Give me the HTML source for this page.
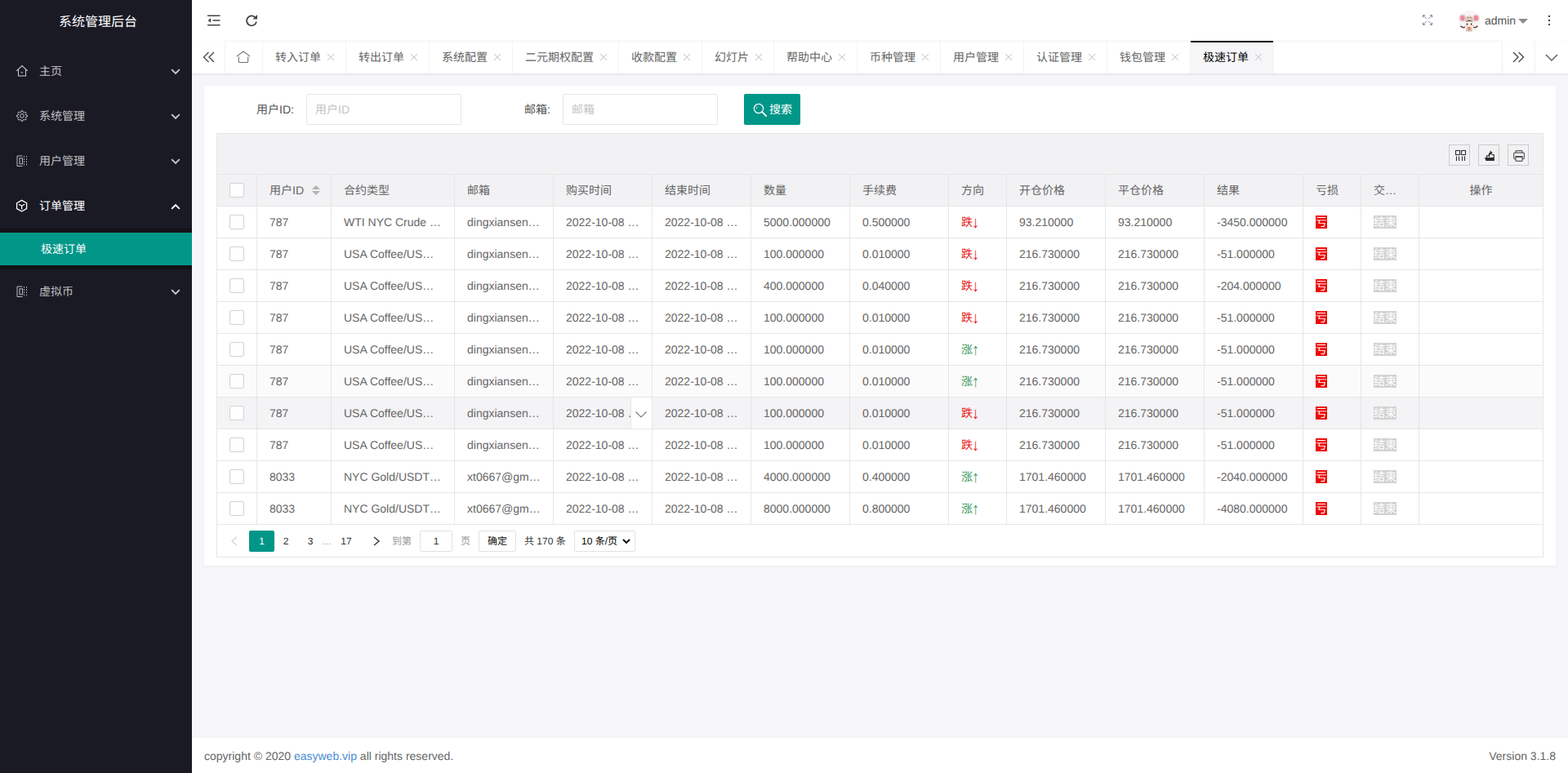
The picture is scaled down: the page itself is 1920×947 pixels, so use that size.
<!DOCTYPE html>
<html lang="zh-CN">
<head>
<meta charset="utf-8">
<title>系统管理后台</title>
<style>
*{box-sizing:border-box;margin:0;padding:0}
html,body{width:1920px;height:947px;overflow:hidden}
body{position:relative;background:#f6f6f9;font-family:"Liberation Sans","Noto Sans CJK SC",sans-serif;font-size:14px;color:#666;line-height:24px;text-rendering:geometricPrecision}
i{font-style:normal}
a{color:#4a8bd2;text-decoration:none}
svg{display:block}

/* ---------- sidebar ---------- */
.side{position:absolute;left:0;top:0;width:235px;height:947px;background:#1a1a24;z-index:5}
.logo{position:absolute;left:0;top:0;width:240px;height:50px;line-height:55px;text-align:center;color:#fff;font-size:16px;white-space:nowrap}
.nav{position:absolute;left:0;top:60px;width:235px}
.ni{position:relative;height:55px;line-height:55px;color:rgba(255,255,255,.72);font-size:14px;white-space:nowrap}
.ni.on{color:#fff}
.ni .ic{position:absolute;left:19px;top:19px;width:16px;height:16px}
.ni .tx{position:absolute;left:48px;top:0}
.ni .ar{position:absolute;left:209px;top:24px;width:12px;height:8px}
.child{height:50px;background:rgba(0,0,0,.3);padding:5px 0}
.child .it{height:40px;line-height:40px;background:#009688;color:#fff;padding-left:50px;white-space:nowrap}

/* ---------- header ---------- */
.header{position:absolute;left:235px;top:0;width:1685px;height:50px;background:#fff}
.header .hi{position:absolute}
.admin{position:absolute;left:1583px;top:0;height:50px;line-height:51px;font-size:14px;color:#555;white-space:nowrap}
.caret{position:absolute;left:1624px;top:23px;width:0;height:0;border:6px solid transparent;border-top-color:#8c8c8c;border-bottom-width:0}
.avatar{position:absolute;left:1551px;top:13px;width:26px;height:26px}

/* ---------- tabs ---------- */
.tabs{position:absolute;left:235px;top:50px;width:1685px;height:40px;background:#fff;box-shadow:0 1px 3px rgba(0,0,0,.10),inset 0 1px 0 #f4f4f6;z-index:3}
.tab{position:absolute;top:0;height:40px;border-right:1px solid #f3f3f5;line-height:40px;color:#666;white-space:nowrap;overflow:hidden}
.tab .tt{position:absolute;left:15px;top:0}
.tab .x{position:absolute;right:13px;top:15px}
.tab.home svg{position:absolute;left:13px;top:12px}
.tab.act{background:#f6f6f8;box-shadow:inset 0 2px 0 #000;color:#000}
.tab-ctl{position:absolute;top:0;width:40px;height:40px;background:#fff}
.tab-ctl svg{position:absolute}
.tl{left:0;width:41px;border-right:1px solid #f2f2f4}
.tl svg{left:13px;top:13px}
.tr1{left:1604px;border-left:1px solid #f2f2f4}
.tr1 svg{left:11px;top:13px}
.tr2{left:1644px;border-left:1px solid #f2f2f4}
.tr2 svg{left:12px;top:16px}

/* ---------- card ---------- */
.card{position:absolute;left:250px;top:105px;width:1655px;height:588px;background:#fff;border-radius:2px;box-shadow:0 1px 2px rgba(0,0,0,.04)}
.flabel{position:absolute;top:10px;height:38px;line-height:38px;text-align:right;color:#555;white-space:nowrap}
.finput{position:absolute;top:10px;width:190px;height:38px;line-height:36px;border:1px solid #e6e6e6;border-radius:2px;padding-left:10px;color:#c4c4c4;white-space:nowrap;background:#fff}
.sbtn{position:absolute;left:661px;top:10px;width:69px;height:38px;line-height:38px;background:#009688;border-radius:2px;color:#fff;white-space:nowrap}
.sbtn>svg{position:absolute;left:11px;top:11px}
.sbtn span{position:absolute;left:31px;top:0}

/* ---------- table ---------- */
.tview{position:absolute;left:15px;top:58px;width:1625px;height:520px;border:1px solid #e6e6e6;background:#fff}
.ttool{position:relative;height:50px;background:#f2f2f4;border-bottom:1px solid #e6e6e6}
.tbtn{position:absolute;top:13px;width:26px;height:26px;border:1px solid #ccc;background:transparent}
.tbtn svg{position:absolute;left:0;top:0}
.tb{border-collapse:separate;border-spacing:0;table-layout:fixed;width:1623px}
.tb th,.tb td{height:39px;border-right:1px solid #e6e6e6;border-bottom:1px solid #e6e6e6;text-align:left;font-weight:normal;font-size:14px;color:#666;padding:0;position:relative;vertical-align:middle}
.tb th{background:#f2f2f4}
.tb .last{border-right:none}
.tb .c{height:38px;line-height:39px;padding:0 15px;white-space:nowrap;overflow:hidden}
.tb .ctr{text-align:center}
.tb .ck{text-align:center}
.cb{display:block;width:18px;height:18px;border:1px solid #d2d2d2;border-radius:2px;background:#fff;margin:0 0 0 15px}
.tb tr.hov td{background:#f4f3f5}
.tb tr.hov2 td{background:#fcfbfc}
.sort{display:inline-block;position:relative;width:10px;height:20px;margin-left:10px;vertical-align:middle;top:-1px}
.sort i{position:absolute;left:0;width:0;height:0;border:5px solid transparent}
.sort .up{top:-1px;border-bottom-color:#b2b2b2;border-top-width:0;top:4px}
.sort .dn{top:11px;border-top-color:#b2b2b2;border-bottom-width:0}
.dn-t{color:#e81818}
.up-t{color:#3a9a62}
.arw{display:inline-block;transform:translateY(2px) scale(1.3,1.42);transform-origin:50% 62%}
.kui{display:inline-block;width:14px;height:16px;line-height:16px;background:#ee0606;color:#fff;vertical-align:top;margin-top:11px;overflow:hidden}
.js{display:inline-block;width:28px;height:16px;line-height:16px;background:#d2d2d2;color:#fff;vertical-align:top;margin-top:11px;overflow:hidden}
.gdown{position:absolute;right:0;top:0;width:26px;height:38px;border-left:1px solid #e6e6e6;background:#fff}
.gdown svg{position:absolute;left:5px;top:17px}

/* ---------- pagination ---------- */
.pg{position:absolute;left:0;top:479px;width:1623px;height:39px;font-size:12px;color:#333;line-height:26px}
.pg>*{position:absolute;top:7px;height:26px;line-height:26px;white-space:nowrap}
.pg .cur{background:#009688;color:#fff;border-radius:2px;text-align:center}
.pg .num{text-align:center}
.pg .gray{color:#999}
.pg .box{border:1px solid #e2e2e2;border-radius:2px;background:#fff;text-align:center;line-height:24px}

/* ---------- footer ---------- */
.footer{position:absolute;left:235px;top:904px;width:1685px;height:43px;line-height:44px;box-shadow:0 -1px 0 rgba(0,0,0,.012);background:#fff;color:#666;font-size:14px;white-space:nowrap}
.footer .fl{position:absolute;left:15px;top:0}
.footer .fr{position:absolute;right:15px;top:0}

</style>
</head>
<body>
<div class="side">
<div class="logo">系统管理后台</div>
<div class="nav">
<div class="ni"><svg class="ic" viewBox="0 0 16 16"><path d="M1.2 7.8 L8 1.5 L14.8 7.8 M3.5 6.2 V13.9 H12.5 V6.2 M6.6 9.7 H9" fill="none" stroke="#c9c9cd" stroke-width="1.05"/></svg><span class="tx">主页</span><svg class="ar" viewBox="0 0 12 8"><path d="M1.2 1.2 L6 6 L10.8 1.2" fill="none" stroke="#c9c9cd" stroke-width="1.9"/></svg></div>
<div class="ni"><svg class="ic" viewBox="0 0 16 16"><g fill="none" stroke="#c9c9cd" stroke-width="1.1" transform="translate(8 7.9) scale(.87) translate(-8 -8)"><circle cx="8" cy="8" r="2.7"/><path d="M6.9 1 H9.1 L9.5 2.9 L10.9 3.5 L12.5 2.4 L14 4 L12.9 5.5 L13.5 6.9 L15.4 7.2 V9.2 L13.5 9.6 L12.9 10.9 L14 12.5 L12.5 14 L10.9 12.9 L9.5 13.5 L9.1 15.4 H6.9 L6.5 13.5 L5.1 12.9 L3.5 14 L2 12.5 L3.1 10.9 L2.5 9.6 L0.6 9.2 V7.2 L2.5 6.9 L3.1 5.5 L2 4 L3.5 2.4 L5.1 3.5 L6.5 2.9 Z"/></g></svg><span class="tx">系统管理</span><svg class="ar" viewBox="0 0 12 8"><path d="M1.2 1.2 L6 6 L10.8 1.2" fill="none" stroke="#c9c9cd" stroke-width="1.9"/></svg></div>
<div class="ni"><svg class="ic" viewBox="0 0 16 16"><g fill="none" stroke="#b9b9bd" stroke-width="1"><path d="M8.5 2 H2 V14.5 H8.5"/><rect x="5" y="4.8" width="3.5" height="7"/><path d="M10.5 2 V15 M13.5 2 V15" stroke-dasharray="1.6 1.6"/></g></svg><span class="tx">用户管理</span><svg class="ar" viewBox="0 0 12 8"><path d="M1.2 1.2 L6 6 L10.8 1.2" fill="none" stroke="#c9c9cd" stroke-width="1.9"/></svg></div>
<div class="ni on"><svg class="ic" viewBox="0 0 16 16"><path d="M7.6 1.4 L13.6 4.8 V11.6 L7.6 15 L1.6 11.6 V4.8 Z M4 6.2 L7.6 8.3 L11.2 6.2 M7.6 8.3 V12.6" fill="none" stroke="#fff" stroke-width="1.3" stroke-linejoin="round"/></svg><span class="tx">订单管理</span><svg class="ar" viewBox="0 0 12 8"><path d="M1.2 6.8 L6 2 L10.8 6.8" fill="none" stroke="#fff" stroke-width="1.9"/></svg></div>
<div class="child"><div class="it">极速订单</div></div>
<div class="ni"><svg class="ic" viewBox="0 0 16 16"><g fill="none" stroke="#b9b9bd" stroke-width="1"><path d="M8.5 2 H2 V14.5 H8.5"/><rect x="5" y="4.8" width="3.5" height="7"/><path d="M10.5 2 V15 M13.5 2 V15" stroke-dasharray="1.6 1.6"/></g></svg><span class="tx">虚拟币</span><svg class="ar" viewBox="0 0 12 8"><path d="M1.2 1.2 L6 6 L10.8 1.2" fill="none" stroke="#c9c9cd" stroke-width="1.9"/></svg></div>
</div>
</div>
<div class="header">
<svg class="hi" style="left:19px;top:18px" width="16" height="14" viewBox="0 0 16 14"><path d="M0.6 1.2 H15 M7 7 H15 M0.6 12.8 H15" stroke="#444" stroke-width="1.6" stroke-linecap="round" fill="none"/><path d="M4.2 4.3 V9.7 L0.6 7 Z" fill="#444"/></svg>
<svg class="hi" style="left:65px;top:17px" width="16" height="16" viewBox="0 0 16 16"><path d="M13.2 5.2 A6 6 0 1 0 14 9.6" fill="none" stroke="#444" stroke-width="1.8"/><path d="M15 1 V6.6 H9.4 Z" fill="#444"/></svg>
<svg class="hi" style="left:1506px;top:17px" width="14" height="15" viewBox="0 0 14 15"><g fill="none" stroke="#7a7f99" stroke-width="0.95"><path d="M1.5 4.4 V1.7 H4.2 M1.7 1.9 L5.6 5.8"/><path d="M9.8 1.7 H12.5 V4.4 M12.3 1.9 L8.4 5.8"/><path d="M1.5 10.6 V13.3 H4.2 M1.7 13.1 L5.6 9.2"/><path d="M9.8 13.3 H12.5 V10.6 M12.3 13.1 L8.4 9.2"/></g></svg>
<svg class="avatar" viewBox="0 0 26 26"><circle cx="13" cy="13" r="13" fill="#f7f5f5"/><circle cx="4.9" cy="9" r="4.5" fill="#e6d6d2"/><circle cx="21.3" cy="9" r="4.5" fill="#e6d6d2"/><ellipse cx="4.9" cy="9.2" rx="2.7" ry="3.1" fill="#f0869c"/><ellipse cx="21.3" cy="9.2" rx="2.7" ry="3.1" fill="#f0869c"/><path d="M7.8 13 Q8 6.2 13 6.2 Q18 6.2 18.2 13 Z" fill="#dccbbd"/><path d="M10.6 8.8 H12 M14.2 8.8 H15.6" stroke="#6b5548" stroke-width="0.9"/><ellipse cx="13" cy="16.6" rx="5.1" ry="4.1" fill="#fdeae3"/><path d="M7.8 14.4 Q13 9 18.2 14.4 Q13 11.6 7.8 14.4 Z" fill="#3b2a24"/><ellipse cx="10.5" cy="16.6" rx="0.75" ry="1.15" fill="#111"/><ellipse cx="15.6" cy="16.6" rx="0.75" ry="1.15" fill="#111"/><circle cx="9" cy="18.2" r="0.9" fill="#f8b9bb"/><circle cx="17" cy="18.2" r="0.9" fill="#f8b9bb"/><path d="M2.4 18.8 Q5 21.6 7.8 20.2 M18.2 20.2 Q21 21.6 23.4 18.8" fill="none" stroke="#5d3d35" stroke-width="1.5"/><path d="M9.6 20.6 H16.4 L17 25.6 H9 Z" fill="#d3c0af"/><path d="M11.2 20.2 L13 22.4 L14.8 20.2 Z M12 23.6 L13 21.8 L14 23.6 Z" fill="#e8402a"/></svg>
<div class="admin">admin</div>
<i class="caret"></i>
<svg class="hi" style="left:1660px;top:18px" width="4" height="14" viewBox="0 0 4 14"><circle cx="2" cy="1.9" r="1.15" fill="#333"/><circle cx="2" cy="7" r="1.15" fill="#333"/><circle cx="2" cy="12.1" r="1.15" fill="#333"/></svg>
</div>
<div class="tabs">
<div class="tab-ctl tl"><svg width="16" height="14" viewBox="0 0 16 14"><path d="M7.5 1 L1.5 7 L7.5 13 M14 1 L8 7 L14 13" fill="none" stroke="#555" stroke-width="1.5"/></svg></div>
<div class="tab home" style="left:41px;width:46px"><svg width="18" height="16" viewBox="0 0 18 16"><path d="M0.8 7.1 L9 1 L17.2 7.1 M3.3 7.4 V13.6 Q3.3 14.5 4.2 14.5 H13.8 Q14.7 14.5 14.7 13.6 V7.4" fill="none" stroke="#707070" stroke-width="1.1"/></svg></div>
<div class="tab" style="left:87px;width:102px"><span class="tt">转入订单</span><svg class="x" width="10" height="10" viewBox="0 0 10 10"><path d="M1 1 L9 9 M9 1 L1 9" stroke="#c6c6c6" stroke-width="1.05" fill="none"/></svg></div>
<div class="tab" style="left:189px;width:102px"><span class="tt">转出订单</span><svg class="x" width="10" height="10" viewBox="0 0 10 10"><path d="M1 1 L9 9 M9 1 L1 9" stroke="#c6c6c6" stroke-width="1.05" fill="none"/></svg></div>
<div class="tab" style="left:291px;width:102px"><span class="tt">系统配置</span><svg class="x" width="10" height="10" viewBox="0 0 10 10"><path d="M1 1 L9 9 M9 1 L1 9" stroke="#c6c6c6" stroke-width="1.05" fill="none"/></svg></div>
<div class="tab" style="left:393px;width:130px"><span class="tt">二元期权配置</span><svg class="x" width="10" height="10" viewBox="0 0 10 10"><path d="M1 1 L9 9 M9 1 L1 9" stroke="#c6c6c6" stroke-width="1.05" fill="none"/></svg></div>
<div class="tab" style="left:523px;width:102px"><span class="tt">收款配置</span><svg class="x" width="10" height="10" viewBox="0 0 10 10"><path d="M1 1 L9 9 M9 1 L1 9" stroke="#c6c6c6" stroke-width="1.05" fill="none"/></svg></div>
<div class="tab" style="left:625px;width:88px"><span class="tt">幻灯片</span><svg class="x" width="10" height="10" viewBox="0 0 10 10"><path d="M1 1 L9 9 M9 1 L1 9" stroke="#c6c6c6" stroke-width="1.05" fill="none"/></svg></div>
<div class="tab" style="left:713px;width:102px"><span class="tt">帮助中心</span><svg class="x" width="10" height="10" viewBox="0 0 10 10"><path d="M1 1 L9 9 M9 1 L1 9" stroke="#c6c6c6" stroke-width="1.05" fill="none"/></svg></div>
<div class="tab" style="left:815px;width:102px"><span class="tt">币种管理</span><svg class="x" width="10" height="10" viewBox="0 0 10 10"><path d="M1 1 L9 9 M9 1 L1 9" stroke="#c6c6c6" stroke-width="1.05" fill="none"/></svg></div>
<div class="tab" style="left:917px;width:102px"><span class="tt">用户管理</span><svg class="x" width="10" height="10" viewBox="0 0 10 10"><path d="M1 1 L9 9 M9 1 L1 9" stroke="#c6c6c6" stroke-width="1.05" fill="none"/></svg></div>
<div class="tab" style="left:1019px;width:102px"><span class="tt">认证管理</span><svg class="x" width="10" height="10" viewBox="0 0 10 10"><path d="M1 1 L9 9 M9 1 L1 9" stroke="#c6c6c6" stroke-width="1.05" fill="none"/></svg></div>
<div class="tab" style="left:1121px;width:102px"><span class="tt">钱包管理</span><svg class="x" width="10" height="10" viewBox="0 0 10 10"><path d="M1 1 L9 9 M9 1 L1 9" stroke="#c6c6c6" stroke-width="1.05" fill="none"/></svg></div>
<div class="tab act" style="left:1223px;width:102px"><span class="tt">极速订单</span><svg class="x" width="10" height="10" viewBox="0 0 10 10"><path d="M1 1 L9 9 M9 1 L1 9" stroke="#c6c6c6" stroke-width="1.05" fill="none"/></svg></div>
<div class="tab-ctl tr1"><svg width="16" height="14" viewBox="0 0 16 14"><path d="M2 1 L8 7 L2 13 M8.5 1 L14.5 7 L8.5 13" fill="none" stroke="#555" stroke-width="1.5"/></svg></div>
<div class="tab-ctl tr2"><svg width="16" height="10" viewBox="0 0 16 10"><path d="M1 1 L8 8 L15 1" fill="none" stroke="#555" stroke-width="1.3"/></svg></div>
</div>
<div class="card">
<label class="flabel" style="left:40px;width:70px">用户ID:</label><div class="finput" style="left:125px">用户ID</div>
<label class="flabel" style="left:354px;width:70px">邮箱:</label><div class="finput" style="left:439px">邮箱</div>
<div class="sbtn"><svg width="17" height="17" viewBox="0 0 17 17"><circle cx="7" cy="7" r="5.6" fill="none" stroke="#fff" stroke-width="1.2"/><path d="M11.2 11.2 L16 16" stroke="#fff" stroke-width="1.8" stroke-linecap="round"/><path d="M4.2 7 A2.8 2.8 0 0 1 5.4 4.7" fill="none" stroke="#fff" stroke-width="0.9"/></svg><span>搜索</span></div>
<div class="tview">
<div class="ttool">
<div class="tbtn" style="left:1508px"><svg width="24" height="24" viewBox="0 0 24 24"><g fill="none" stroke="#2f2f3a" stroke-width="1.1"><rect x="7.5" y="6.5" width="5" height="5"/><rect x="14.5" y="6.5" width="5" height="5"/><path d="M8.5 13.4 V18.9 M11.5 13.4 V18.9 M15.5 13.4 V18.9 M18.5 13.4 V18.9"/></g></svg></div>
<div class="tbtn" style="left:1544px"><svg width="24" height="24" viewBox="0 0 24 24"><path d="M7 15 H18.9 V19 H8.4 Z" fill="#2b2b2b"/><path d="M9.6 15 V12.8 H11.4 M15.4 11.5 H18.3 V15" fill="none" stroke="#2b2b2b" stroke-width="1.1"/><path d="M12.4 14.2 Q12 9.8 14.2 9.2" fill="none" stroke="#2b2b2b" stroke-width="1.7"/><path d="M13.6 6.3 L16.7 9.2 L13.6 12 Z" fill="#2b2b2b"/></svg></div>
<div class="tbtn" style="left:1580px"><svg width="24" height="24" viewBox="0 0 24 24"><g fill="none" stroke="#5a5a5e" stroke-width="1.2"><path d="M9 9.2 V7.4 Q9 6.6 9.8 6.6 H16.2 Q17 6.6 17 7.4 V9.2"/><path d="M9 16.6 H7.8 Q6.6 16.6 6.6 15.4 V10.6 Q6.6 9.2 8 9.2 H18 Q19.4 9.2 19.4 10.6 V15.4 Q19.4 16.6 18.2 16.6 H17"/><path d="M9 14 H17 V18.4 Q17 19.4 16 19.4 H10 Q9 19.4 9 18.4 Z"/><path d="M8.6 14 H17.4" stroke-width="1.7" stroke="#444"/></g></svg></div>
</div>
<table class="tb" cellspacing="0" cellpadding="0">
<colgroup><col style="width:49px"><col style="width:91px"><col style="width:151px"><col style="width:121px"><col style="width:121px"><col style="width:121px"><col style="width:121px"><col style="width:121px"><col style="width:71px"><col style="width:121px"><col style="width:121px"><col style="width:121px"><col style="width:71px"><col style="width:71px"><col style="width:151px"></colgroup>
<thead><tr><th class="ck"><i class="cb"></i></th><th><div class="c">用户ID<span class="sort"><i class="up"></i><i class="dn"></i></span></div></th><th><div class="c">合约类型</div></th><th><div class="c">邮箱</div></th><th><div class="c">购买时间</div></th><th><div class="c">结束时间</div></th><th><div class="c">数量</div></th><th><div class="c">手续费</div></th><th><div class="c">方向</div></th><th><div class="c">开仓价格</div></th><th><div class="c">平仓价格</div></th><th><div class="c">结果</div></th><th><div class="c">亏损</div></th><th><div class="c">交…</div></th><th class="last"><div class="c ctr">操作</div></th></tr></thead>
<tbody>
<tr><td class="ck"><i class="cb"></i></td><td><div class="c">787</div></td><td><div class="c">WTI NYC Crude …</div></td><td><div class="c">dingxiansen…</div></td><td><div class="c">2022-10-08 …</div></td><td><div class="c">2022-10-08 …</div></td><td><div class="c">5000.000000</div></td><td><div class="c">0.500000</div></td><td><div class="c"><span class="dn-t">跌<i class="arw">↓</i></span></div></td><td><div class="c">93.210000</div></td><td><div class="c">93.210000</div></td><td><div class="c">-3450.000000</div></td><td><div class="c"><span class="kui">亏</span></div></td><td><div class="c"><span class="js">结束</span></div></td><td class="last"><div class="c"></div></td></tr>
<tr><td class="ck"><i class="cb"></i></td><td><div class="c">787</div></td><td><div class="c">USA Coffee/US…</div></td><td><div class="c">dingxiansen…</div></td><td><div class="c">2022-10-08 …</div></td><td><div class="c">2022-10-08 …</div></td><td><div class="c">100.000000</div></td><td><div class="c">0.010000</div></td><td><div class="c"><span class="dn-t">跌<i class="arw">↓</i></span></div></td><td><div class="c">216.730000</div></td><td><div class="c">216.730000</div></td><td><div class="c">-51.000000</div></td><td><div class="c"><span class="kui">亏</span></div></td><td><div class="c"><span class="js">结束</span></div></td><td class="last"><div class="c"></div></td></tr>
<tr><td class="ck"><i class="cb"></i></td><td><div class="c">787</div></td><td><div class="c">USA Coffee/US…</div></td><td><div class="c">dingxiansen…</div></td><td><div class="c">2022-10-08 …</div></td><td><div class="c">2022-10-08 …</div></td><td><div class="c">400.000000</div></td><td><div class="c">0.040000</div></td><td><div class="c"><span class="dn-t">跌<i class="arw">↓</i></span></div></td><td><div class="c">216.730000</div></td><td><div class="c">216.730000</div></td><td><div class="c">-204.000000</div></td><td><div class="c"><span class="kui">亏</span></div></td><td><div class="c"><span class="js">结束</span></div></td><td class="last"><div class="c"></div></td></tr>
<tr><td class="ck"><i class="cb"></i></td><td><div class="c">787</div></td><td><div class="c">USA Coffee/US…</div></td><td><div class="c">dingxiansen…</div></td><td><div class="c">2022-10-08 …</div></td><td><div class="c">2022-10-08 …</div></td><td><div class="c">100.000000</div></td><td><div class="c">0.010000</div></td><td><div class="c"><span class="dn-t">跌<i class="arw">↓</i></span></div></td><td><div class="c">216.730000</div></td><td><div class="c">216.730000</div></td><td><div class="c">-51.000000</div></td><td><div class="c"><span class="kui">亏</span></div></td><td><div class="c"><span class="js">结束</span></div></td><td class="last"><div class="c"></div></td></tr>
<tr><td class="ck"><i class="cb"></i></td><td><div class="c">787</div></td><td><div class="c">USA Coffee/US…</div></td><td><div class="c">dingxiansen…</div></td><td><div class="c">2022-10-08 …</div></td><td><div class="c">2022-10-08 …</div></td><td><div class="c">100.000000</div></td><td><div class="c">0.010000</div></td><td><div class="c"><span class="up-t">涨<i class="arw">↑</i></span></div></td><td><div class="c">216.730000</div></td><td><div class="c">216.730000</div></td><td><div class="c">-51.000000</div></td><td><div class="c"><span class="kui">亏</span></div></td><td><div class="c"><span class="js">结束</span></div></td><td class="last"><div class="c"></div></td></tr>
<tr class="hov2"><td class="ck"><i class="cb"></i></td><td><div class="c">787</div></td><td><div class="c">USA Coffee/US…</div></td><td><div class="c">dingxiansen…</div></td><td><div class="c">2022-10-08 …</div></td><td><div class="c">2022-10-08 …</div></td><td><div class="c">100.000000</div></td><td><div class="c">0.010000</div></td><td><div class="c"><span class="up-t">涨<i class="arw">↑</i></span></div></td><td><div class="c">216.730000</div></td><td><div class="c">216.730000</div></td><td><div class="c">-51.000000</div></td><td><div class="c"><span class="kui">亏</span></div></td><td><div class="c"><span class="js">结束</span></div></td><td class="last"><div class="c"></div></td></tr>
<tr class="hov"><td class="ck"><i class="cb"></i></td><td><div class="c">787</div></td><td><div class="c">USA Coffee/US…</div></td><td><div class="c">dingxiansen…</div></td><td class="gd"><div class="c">2022-10-08 …</div><div class="gdown"><svg width="14" height="8" viewBox="0 0 14 8"><path d="M0.5 0.5 L7 7 L13.5 0.5" fill="none" stroke="#777" stroke-width="1.1"/></svg></div></td><td><div class="c">2022-10-08 …</div></td><td><div class="c">100.000000</div></td><td><div class="c">0.010000</div></td><td><div class="c"><span class="dn-t">跌<i class="arw">↓</i></span></div></td><td><div class="c">216.730000</div></td><td><div class="c">216.730000</div></td><td><div class="c">-51.000000</div></td><td><div class="c"><span class="kui">亏</span></div></td><td><div class="c"><span class="js">结束</span></div></td><td class="last"><div class="c"></div></td></tr>
<tr><td class="ck"><i class="cb"></i></td><td><div class="c">787</div></td><td><div class="c">USA Coffee/US…</div></td><td><div class="c">dingxiansen…</div></td><td><div class="c">2022-10-08 …</div></td><td><div class="c">2022-10-08 …</div></td><td><div class="c">100.000000</div></td><td><div class="c">0.010000</div></td><td><div class="c"><span class="dn-t">跌<i class="arw">↓</i></span></div></td><td><div class="c">216.730000</div></td><td><div class="c">216.730000</div></td><td><div class="c">-51.000000</div></td><td><div class="c"><span class="kui">亏</span></div></td><td><div class="c"><span class="js">结束</span></div></td><td class="last"><div class="c"></div></td></tr>
<tr><td class="ck"><i class="cb"></i></td><td><div class="c">8033</div></td><td><div class="c">NYC Gold/USDT…</div></td><td><div class="c">xt0667@gm…</div></td><td><div class="c">2022-10-08 …</div></td><td><div class="c">2022-10-08 …</div></td><td><div class="c">4000.000000</div></td><td><div class="c">0.400000</div></td><td><div class="c"><span class="up-t">涨<i class="arw">↑</i></span></div></td><td><div class="c">1701.460000</div></td><td><div class="c">1701.460000</div></td><td><div class="c">-2040.000000</div></td><td><div class="c"><span class="kui">亏</span></div></td><td><div class="c"><span class="js">结束</span></div></td><td class="last"><div class="c"></div></td></tr>
<tr><td class="ck"><i class="cb"></i></td><td><div class="c">8033</div></td><td><div class="c">NYC Gold/USDT…</div></td><td><div class="c">xt0667@gm…</div></td><td><div class="c">2022-10-08 …</div></td><td><div class="c">2022-10-08 …</div></td><td><div class="c">8000.000000</div></td><td><div class="c">0.800000</div></td><td><div class="c"><span class="up-t">涨<i class="arw">↑</i></span></div></td><td><div class="c">1701.460000</div></td><td><div class="c">1701.460000</div></td><td><div class="c">-4080.000000</div></td><td><div class="c"><span class="kui">亏</span></div></td><td><div class="c"><span class="js">结束</span></div></td><td class="last"><div class="c"></div></td></tr>
</tbody>
</table>
<div class="pg">
<svg style="left:16px;top:14px;height:12px" width="10" height="12" viewBox="0 0 10 12"><path d="M8 1 L2 6 L8 11" fill="none" stroke="#d2d2d2" stroke-width="1.3"/></svg>
<span class="cur" style="left:39px;width:31px">1</span>
<span class="num" style="left:70px;width:28px">2</span>
<span class="num" style="left:100px;width:28px">3</span>
<span class="gray" style="left:128px;width:14px">…</span>
<span class="num" style="left:144px;width:28px">17</span>
<svg style="left:190px;top:14px;height:12px" width="10" height="12" viewBox="0 0 10 12"><path d="M2 1 L8 6 L2 11" fill="none" stroke="#333" stroke-width="1.4"/></svg>
<span class="gray" style="left:214px">到第</span>
<span class="box" style="left:248px;width:40px">1</span>
<span class="gray" style="left:298px">页</span>
<span class="box" style="left:320px;width:46px;color:#111">确定</span>
<span style="left:376px">共 170 条</span>
<span class="box" style="left:437px;width:75px;text-align:left;padding-left:8px;color:#000">10 条/页<svg style="position:absolute;left:58px;top:9px" width="10" height="7" viewBox="0 0 10 7"><path d="M1 1 L5 5 L9 1" fill="none" stroke="#000" stroke-width="1.8"/></svg></span>
</div>
</div>
</div>
<div class="footer"><span class="fl">copyright © 2020 <a>easyweb.vip</a> all rights reserved.</span><span class="fr">Version 3.1.8</span></div>
</body>
</html>
